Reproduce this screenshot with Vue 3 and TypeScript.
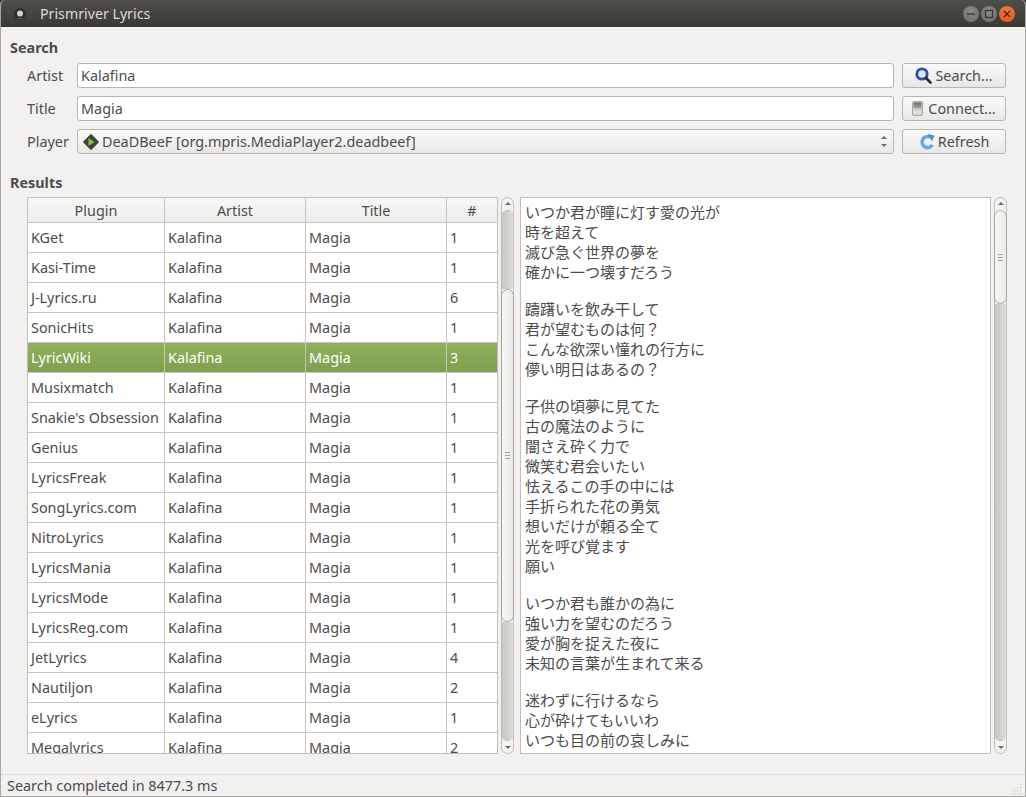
<script setup lang="ts">
const rows: [string, number][] = [
  ['KGet', 1], ['Kasi-Time', 1], ['J-Lyrics.ru', 6], ['SonicHits', 1], ['LyricWiki', 3], ['Musixmatch', 1],
  ["Snakie's Obsession", 1], ['Genius', 1], ['LyricsFreak', 1], ['SongLyrics.com', 1], ['NitroLyrics', 1],
  ['LyricsMania', 1], ['LyricsMode', 1], ['LyricsReg.com', 1], ['JetLyrics', 4], ['Nautiljon', 2], ['eLyrics', 1], ['Megalyrics', 2],
]
const stanzas: string[][] = [
  ['いつか君が瞳に灯す愛の光が', '時を超えて', '滅び急ぐ世界の夢を', '確かに一つ壊すだろう'],
  ['躊躇いを飲み干して', '君が望むものは何？', 'こんな欲深い憧れの行方に', '儚い明日はあるの？'],
  ['子供の頃夢に見てた', '古の魔法のように', '闇さえ砕く力で', '微笑む君会いたい', '怯えるこの手の中には', '手折られた花の勇気', '想いだけが頼る全て', '光を呼び覚ます', '願い'],
  ['いつか君も誰かの為に', '強い力を望むのだろう', '愛が胸を捉えた夜に', '未知の言葉が生まれて来る'],
  ['迷わずに行けるなら', '心が砕けてもいいわ', 'いつも目の前の哀しみに'],
]
</script>

<template>
  <div class="window">
    <header class="titlebar">
      <svg class="app-icon" width="14" height="14" viewBox="0 0 14 14">
        <circle cx="7" cy="7" r="6" fill="#2f2e2a" />
        <circle cx="7" cy="6.5" r="3" fill="#d5d3cd" />
        <path d="M3.5 11a5 2.5 0 0 0 7 0" fill="#77756f" />
      </svg>
      <span class="title-text">Prismriver Lyrics</span>
      <div class="win-buttons">
        <span class="wb"><svg width="16" height="16" viewBox="0 0 16 16"><path d="M4 8h8" stroke="#33322e" stroke-width="1.2" /></svg></span>
        <span class="wb"><svg width="16" height="16" viewBox="0 0 16 16"><rect x="4.5" y="4.5" width="7" height="7" fill="none" stroke="#33322e" stroke-width="1.2" /></svg></span>
        <span class="wb close"><svg width="16" height="16" viewBox="0 0 16 16"><path d="M5 5l6 6M11 5l-6 6" stroke="#4a2414" stroke-width="1.4" /></svg></span>
      </div>
    </header>

    <main class="content">
      <h2 class="group-title">Search</h2>
      <div class="form">
        <label>Artist</label>
        <div class="field">Kalafina</div>
        <button class="btn">
          <svg width="17" height="17" viewBox="0 0 17 17">
            <circle cx="7" cy="7" r="5.2" fill="#dbe5f5" stroke="#2c4fa6" stroke-width="2.8" />
            <path d="M11 11l4.5 4.5" stroke="#2b2b2b" stroke-width="2.6" stroke-linecap="round" />
          </svg>
          <span>Search...</span>
        </button>
        <label>Title</label>
        <div class="field">Magia</div>
        <button class="btn connect">
          <svg width="11" height="15" viewBox="0 0 11 15">
            <defs>
              <linearGradient id="screen" x1="0" y1="0" x2="0" y2="1">
                <stop offset="0" stop-color="#6c6c67" />
                <stop offset="1" stop-color="#a9a9a5" />
              </linearGradient>
            </defs>
            <rect x="0.500" y="0.500" width="10" height="14" rx="1.500" fill="#d4d4d1" stroke="#a8a8a4" />
            <rect x="1.500" y="1.500" width="8" height="6" fill="url(#screen)" />
            <path d="M3 10v3M5.500 10v3M8 10v3" stroke="#f4f4f2" stroke-width="1" />
          </svg>
          <span>Connect...</span>
        </button>
        <label>Player</label>
        <div class="combo">
          <svg width="16" height="16" viewBox="0 0 16 16">
            <path d="M8 .8L15.200 8 8 15.200 .8 8z" fill="#3c4438" stroke="#3c4438" stroke-width="1.400" stroke-linejoin="round" />
            <path d="M5.500 4l6 4-6 4z" fill="#82c43c" />
          </svg>
          <span class="combo-text">DeaDBeeF [org.mpris.MediaPlayer2.deadbeef]</span>
          <span class="combo-arrows"><i class="up"></i><i class="down"></i></span>
        </div>
        <button class="btn">
          <svg width="16" height="16" viewBox="0 0 16 16">
            <path d="M13.200 10.800A5.400 5.400 0 1 1 10.800 3.200" fill="none" stroke="#6aa5de" stroke-width="3.600" />
            <path d="M8.500 0l7 1.500-2.600 6z" fill="#4f8fd0" />
          </svg>
          <span>Refresh</span>
        </button>
      </div>

      <h2 class="group-title results-title">Results</h2>
      <div class="results">
        <div class="table">
          <div class="row head">
            <div class="c1">Plugin</div><div class="c2">Artist</div><div class="c3">Title</div><div class="c4">#</div>
          </div>
          <div v-for="r in rows" :key="r[0]" class="row" :class="{ selected: r[0] === 'LyricWiki' }">
            <div class="c1">{{ r[0] }}</div><div class="c2">Kalafina</div><div class="c3">Magia</div><div class="c4">{{ r[1] }}</div>
          </div>
        </div>
        <div class="scrollbar left-bar">
          <div class="stepper"><i class="up"></i></div>
          <div class="track">
            <div class="gutter top-gutter"></div>
            <div class="thumb left-thumb"><span class="grip"></span></div>
            <div class="gutter rest"></div>
          </div>
          <div class="stepper"><i class="down"></i></div>
        </div>
        <div class="lyrics">
          <p v-for="(s, i) in stanzas" :key="i"><span v-for="l in s" :key="l" class="line">{{ l }}</span></p>
        </div>
        <div class="scrollbar">
          <div class="stepper"><i class="up"></i></div>
          <div class="track">
            <div class="thumb right-thumb"><span class="grip"></span></div>
            <div class="gutter rest"></div>
          </div>
          <div class="stepper"><i class="down"></i></div>
        </div>
      </div>
    </main>

    <footer class="statusbar">
      <span>Search completed in 8477.3 ms</span>
      <svg class="size-grip" width="12" height="12" viewBox="0 0 12 12" fill="#c8c6c1">
        <rect x="9" y="1" width="1.2" height="1.2" /><rect x="6" y="4" width="1.2" height="1.2" /><rect x="9" y="4" width="1.2" height="1.2" />
        <rect x="3" y="7" width="1.2" height="1.2" /><rect x="6" y="7" width="1.2" height="1.2" /><rect x="9" y="7" width="1.2" height="1.2" />
        <rect x="0" y="10" width="1.2" height="1.2" /><rect x="3" y="10" width="1.2" height="1.2" /><rect x="6" y="10" width="1.2" height="1.2" /><rect x="9" y="10" width="1.2" height="1.2" />
      </svg>
    </footer>
  </div>
</template>

<style>
html, body { margin: 0; background: #3c3b37; }
</style>

<style scoped>
.window {
  width: 1026px; height: 797px; box-sizing: border-box; display: flex; flex-direction: column;
  background: #f2f1f0; color: #4c4c4c; overflow: hidden; border-radius: 5px 5px 0 0;
  font-family: "Noto Sans", "Noto Sans CJK JP", sans-serif; font-size: 14.4px;
  border-left: 1px solid #a9a7a2; border-right: 1px solid #a9a7a2; border-bottom: 1px solid #a9a7a2;
}
.titlebar {
  height: 27px; margin: 0 -1px; flex: none; display: flex; align-items: center; padding: 0 10px 0 13px;
  background: linear-gradient(#4f4e49, #3a3935); color: #dfdbd2;
}
.app-icon { margin-right: 13px; }
.title-text { font-size: 14.2px; }
.win-buttons { margin-left: auto; display: flex; gap: 2px; margin-right: 1px; }
.wb { width: 16px; height: 16px; border-radius: 50%; background: radial-gradient(circle at 50% 30%, #8a8984, #6c6b66); display: flex; }
.wb.close { background: radial-gradient(circle at 50% 30%, #f07a40, #df5420); }
.content { flex: 1; min-height: 0; padding: 12px 19px 20px 9px; display: flex; flex-direction: column; }
.group-title { margin: 0; font-size: 14.4px; font-weight: 700; line-height: 18px; }
.form {
  display: grid; grid-template-columns: 42px 1fr 104px; column-gap: 8px; row-gap: 8px;
  margin-top: 6px; padding-left: 17px; align-items: center;
}
.form label { line-height: 25px; }
.field {
  height: 25px; box-sizing: border-box; padding: 0 3px; line-height: 23px; background: #fff;
  border: 1px solid #b9b6b1; border-radius: 3px;
}
.btn {
  height: 25px; padding: 0; display: flex; align-items: center; justify-content: center; gap: 3px;
  font: inherit; color: inherit; border: 1px solid #b9b6b1; border-radius: 3px;
  background: linear-gradient(#fafafa, #e9e8e6);
}
.btn.connect { gap: 5px; }
.combo {
  height: 25px; box-sizing: border-box; display: flex; align-items: center; gap: 3px; padding: 0 4px 0 5px;
  border: 1px solid #b9b6b1; border-radius: 3px; background: linear-gradient(#fafafa, #e9e8e6);
}
.combo-arrows { margin-left: auto; display: flex; flex-direction: column; gap: 5px; margin-right: 2px; }
i.up, i.down { display: block; width: 0; height: 0; border-left: 3px solid transparent; border-right: 3px solid transparent; }
i.up { border-bottom: 3px solid #6a6a66; }
i.down { border-top: 3px solid #6a6a66; }
.results-title { margin-top: 20px; }
.results { flex: 1; min-height: 0; display: flex; margin-top: 5px; padding-left: 17px; }
.table {
  width: 471px; flex: none; box-sizing: border-box; overflow: hidden; background: #fff;
  border: 1px solid #c2bfba;
}
.row { display: flex; height: 30px; box-sizing: border-box; border-bottom: 1px solid #c8c6c1; }
.row > div { box-sizing: border-box; line-height: 29px; padding-left: 3px; border-right: 1px solid #c8c6c1; white-space: nowrap; overflow: hidden; }
.c1 { width: 137px; }
.c2, .c3 { width: 141px; }
.c4 { flex: 1; border-right: none !important; }
.row.head { height: 25px; background: linear-gradient(#f7f7f6, #eeedeb); }
.row.head > div { text-align: center; line-height: 25px; padding-left: 0; }
.row.selected { background: linear-gradient(#8fb05a, #7f9f50); color: #fff; }
.scrollbar {
  width: 13px; flex: none; margin-left: 3px; display: flex; flex-direction: column;
  background: #f4f3f2; border-radius: 7px; box-shadow: inset 0 0 0 1px #c2bfba;
}
.left-bar { margin-right: 6px; }
.stepper { height: 13px; flex: none; display: flex; justify-content: center; align-items: center; }
.track { flex: 1; min-height: 0; display: flex; flex-direction: column; border-radius: 7px; overflow: hidden; }
.gutter {
  flex: none; box-sizing: border-box; background: linear-gradient(90deg, #c9c8c5, #dddcda);
  border-left: 1px solid #bdbbb6; border-right: 1px solid #c8c6c1; border-bottom: 1px solid #b5b3ae;
}
.top-gutter { height: 79px; border-top: 1px solid #b5b3ae; border-bottom: none; }
.gutter.rest { flex: 1; }
.left-thumb { height: 333px; }
.right-thumb { height: 94px; }
.thumb {
  flex: none; box-sizing: border-box; border: 1px solid #a5a39e; border-radius: 7px;
  background: linear-gradient(90deg, #f7f7f6, #ecebe9); display: flex; align-items: center; justify-content: center;
}
.grip { width: 5px; height: 7px; border-top: 1px solid #a5a39e; border-bottom: 1px solid #a5a39e; position: relative; box-sizing: border-box; }
.grip::after { content: ""; position: absolute; left: 0; right: 0; top: 2px; height: 1px; background: #a5a39e; }
.lyrics {
  width: 471px; flex: none; box-sizing: border-box; overflow: hidden; background: #fff; border: 1px solid #c2bfba;
  padding: 4px 4px; font-size: 15px; line-height: 20px;
}
.lyrics p { margin: 0 0 17px; }
.line { display: block; white-space: nowrap; }
.statusbar {
  height: 22px; flex: none; box-sizing: border-box; border-top: 1px solid #dfdedb; display: flex; align-items: center;
  padding-left: 6px; position: relative; background: #f2f1f0;
}
.size-grip { position: absolute; right: 2px; bottom: 1px; }
</style>
